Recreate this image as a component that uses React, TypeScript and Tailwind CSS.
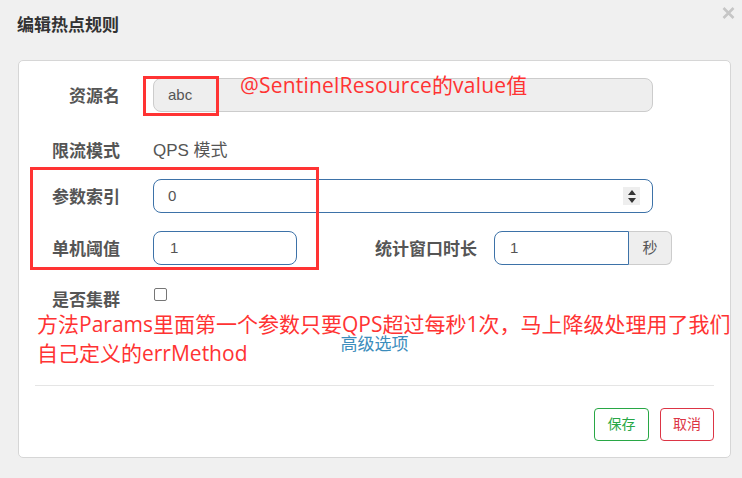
import React from 'react';

const cjk = "font-['Liberation_Sans','Noto_Sans_CJK_SC',sans-serif]";
const note = "font-['Open_Sans','Noto_Sans_CJK_SC',sans-serif]";

function Label({ children, tight }: { children: React.ReactNode; tight?: boolean }) {
  return (
    <div
      className={`w-[101px] shrink-0 pt-[4px] text-right text-[17px] font-bold text-[#555] ${
        tight ? 'leading-[18px]' : 'leading-[22px]'
      }`}
    >
      {children}
    </div>
  );
}

function Spinner() {
  return (
    <div className="flex h-[18px] w-[17px] flex-col items-center justify-center gap-[3px] bg-[#eee]">
      <div className="h-0 w-0 border-x-[4px] border-b-[5px] border-x-transparent border-b-[#333]" />
      <div className="h-0 w-0 border-x-[4px] border-t-[5px] border-x-transparent border-t-[#333]" />
    </div>
  );
}

export default function App() {
  return (
    <div className={`relative h-[478px] w-[742px] overflow-hidden bg-[#f0f0f0] ${cjk}`}>
      {/* header */}
      <div className="flex h-[60px] items-start justify-between pl-[17px] pr-[7px]">
        <div className="mt-[15px] text-[17px] font-bold leading-[22px] text-[#333]">编辑热点规则</div>
        <svg className="mt-[7px]" width="13" height="12" viewBox="0 0 13 12">
          <path d="M1.5 1 L11.5 11 M11.5 1 L1.5 11" stroke="#c6c6c6" strokeWidth="2.6" />
        </svg>
      </div>

      {/* card */}
      <div className="ml-[18px] w-[713px] rounded-[5px] border border-[#d6d6d6] bg-white px-[16px] pb-[16px] pt-[17px]">
        <div className="-ml-[16px]">
          {/* 资源名 */}
          <div className="flex h-[34px] items-center">
            <Label>资源名</Label>
            <div className="ml-[33px] flex h-[34px] w-[500px] items-center rounded-[8px] border border-[#ccc] bg-[#eee] pl-[14px] text-[15px] text-[#555]">
              abc
            </div>
          </div>

          {/* 限流模式 */}
          <div className="mt-[21px] flex h-[34px] items-center">
            <Label>限流模式</Label>
            <div className="ml-[33px] pt-[2px] text-[17px] text-[#555]">QPS 模式</div>
          </div>

          {/* 参数索引 */}
          <div className="mt-[12px] flex h-[34px] items-center">
            <Label>参数索引</Label>
            <div className="ml-[33px] flex h-[34px] w-[500px] items-center justify-between rounded-[8px] border border-[#3d72a8] pl-[14px] pr-[12px] text-[15px] text-[#555]">
              <span>0</span>
              <Spinner />
            </div>
          </div>

          {/* 单机阈值 */}
          <div className="mt-[18px] flex h-[34px] items-center">
            <Label>单机阈值</Label>
            <div className="ml-[33px] flex h-[34px] w-[144px] items-center rounded-[8px] border border-[#3d72a8] pl-[16px] text-[15px] text-[#555]">
              1
            </div>
            <div className="ml-[78px] pt-[4px] text-[17px] font-bold leading-[22px] text-[#555]">统计窗口时长</div>
            <div className="ml-[17px] flex h-[34px]">
              <div className="flex w-[135px] items-center rounded-l-[8px] border border-[#3d72a8] pl-[15px] text-[15px] text-[#555]">
                1
              </div>
              <div className="flex w-[43px] items-center justify-center rounded-r-[6px] border border-l-0 border-[#ccc] bg-[#eee] text-[15px] text-[#555]">
                秒
              </div>
            </div>
          </div>

          {/* 是否集群 */}
          <div className="mt-[23px] flex h-[24px] items-start">
            <Label tight>是否集群</Label>
            <div className="ml-[34px] h-[13px] w-[13px] rounded-[2px] border border-[#767676] bg-white" />
          </div>
        </div>

        <div className="mt-[23px] text-center text-[17px] leading-[20px] text-[#3c8dbc]">高级选项</div>

        {/* footer */}
        <div className="mt-[30px] border-t border-[#e5e5e5] pt-[22px]">
          <div className="flex justify-end gap-[11px]">
            <button className="h-[33px] w-[55px] rounded-[4px] border border-[#28a745] bg-white text-[14px] text-[#28a745]">
              保存
            </button>
            <button className="h-[33px] w-[54px] rounded-[4px] border border-[#dc3545] bg-white text-[14px] text-[#dc3545]">
              取消
            </button>
          </div>
        </div>
      </div>

      {/* annotations */}
      <div className="absolute left-[143px] top-[76px] h-[40px] w-[76px] border-[3px] border-[#ff3333]" />
      <div className="absolute left-[30px] top-[167px] h-[103px] w-[289px] border-[3px] border-[#ff3333]" />
      <div className={`absolute left-[240px] top-[71px] text-[21px] leading-[29px] tracking-[0.2px] text-[#ff3333] ${note}`}>
        @SentinelResource的value值
      </div>
      <div className={`absolute left-[37px] top-[310px] w-[705px] text-[21px] leading-[29px] text-[#ff3333] ${note}`}>
        方法Params里面第一个参数只要QPS超过每秒1次，马上降级处理用了我们
        <br />
        自己定义的errMethod
      </div>
    </div>
  );
}
